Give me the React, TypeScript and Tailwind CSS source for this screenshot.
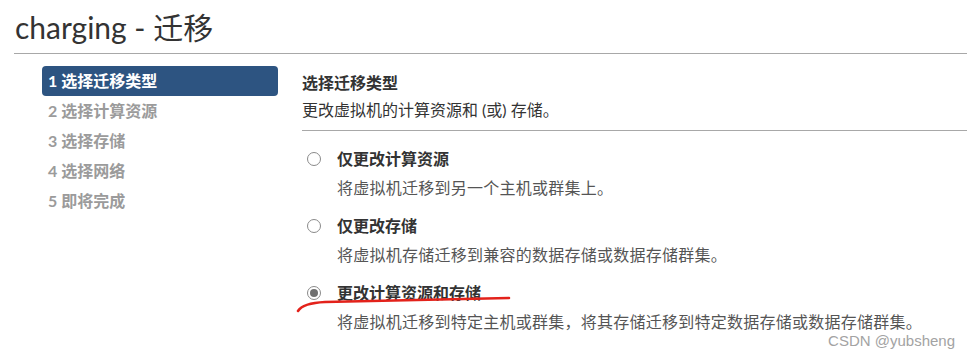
const font = { fontFamily: '"Lato", "Noto Sans CJK SC", sans-serif' };

const steps = ["1 选择迁移类型", "2 选择计算资源", "3 选择存储", "4 选择网络", "5 即将完成"];

const options = [
  { label: "仅更改计算资源", desc: "将虚拟机迁移到另一个主机或群集上。", checked: false },
  { label: "仅更改存储", desc: "将虚拟机存储迁移到兼容的数据存储或数据存储群集。", checked: false },
  {
    label: "更改计算资源和存储",
    desc: "将虚拟机迁移到特定主机或群集，将其存储迁移到特定数据存储或数据存储群集。",
    checked: true,
  },
];

function Radio({ checked }: { checked: boolean }) {
  return (
    <span className="flex h-[14px] w-[14px] shrink-0 items-center justify-center rounded-full border border-[#8a8a8a] bg-white">
      {checked ? <span className="h-[8px] w-[8px] rounded-full bg-[#6f6f6f]" /> : null}
    </span>
  );
}

export default function App() {
  return (
    <main className="relative h-[361px] w-[967px] overflow-hidden bg-white text-[#333]" style={font}>
      <h1 className="pl-[15px] pt-[9px] text-[30px] leading-[36px] font-normal text-[#333]">charging - 迁移</h1>
      <div className="ml-[14px] mt-[8px] border-t border-[#a8a8a8]" />

      <div className="flex pt-[12px]">
        <nav className="ml-[42px] flex w-[236px] flex-col">
          {steps.map((s, i) => (
            <div
              key={s}
              className={
                i === 0
                  ? "h-[30px] rounded-[4px] bg-[#2d5481] pl-[6px] text-[16px] font-bold leading-[30px] text-white"
                  : "h-[30px] pl-[6px] text-[16px] font-bold leading-[30px] text-[#9b9b9b]"
              }
            >
              {s}
            </div>
          ))}
        </nav>

        <section className="ml-[24px] flex-1">
          <div className="border-b border-[#a8a8a8] pb-[8px] pt-[5px]">
            <div className="text-[16px] font-bold leading-6 text-[#333]">选择迁移类型</div>
            <div className="mt-[3px] text-[16px] leading-6 text-[#333]">更改虚拟机的计算资源和 (或) 存储。</div>
          </div>

          <div className="flex flex-col gap-[14px] pt-[16px]">
            {options.map((o) => (
              <div key={o.label}>
                <div className="flex h-6 items-center">
                  <span className="ml-[5px] flex w-[30px]">
                    <Radio checked={o.checked} />
                  </span>
                  <span className="text-[16px] font-bold leading-6 text-[#333]">{o.label}</span>
                </div>
                <div className="ml-[35px] mt-[5px] text-[16px] leading-6 tracking-[0.25px] text-[#555]">{o.desc}</div>
              </div>
            ))}
          </div>
        </section>
      </div>

      <svg className="pointer-events-none absolute left-0 top-0" width="967" height="361">
        <path
          d="M298 311 Q 303 303 325 302 L 509 298"
          fill="none"
          stroke="#e3221b"
          strokeWidth="2.6"
          strokeLinecap="round"
        />
      </svg>

      <span className="absolute bottom-[9px] right-[12px] text-[15px] text-[#a3a3a3]" style={{ fontFamily: '"Liberation Sans", sans-serif' }}>
        CSDN @yubsheng
      </span>
    </main>
  );
}
